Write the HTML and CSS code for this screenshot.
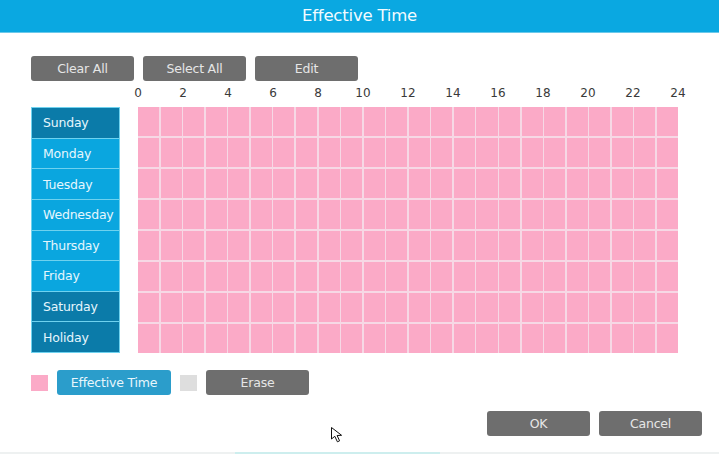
FILE: index.html
```html
<!DOCTYPE html>
<html>
<head>
<meta charset="utf-8">
<link rel="stylesheet" href="styles.css">
</head>
<body>
<div class="dialog">
  <header class="title-bar">Effective Time</header>
  <main class="content">
    <div class="toolbar">
      <button class="btn">Clear All</button>
      <button class="btn">Select All</button>
      <button class="btn">Edit</button>
    </div>
    <div class="hours">
      <span>0</span><span>2</span><span>4</span><span>6</span><span>8</span><span>10</span><span>12</span><span>14</span><span>16</span><span>18</span><span>20</span><span>22</span><span>24</span>
    </div>
    <div class="schedule">
      <ul class="days">
        <li class="day dark">Sunday</li>
        <li class="day">Monday</li>
        <li class="day">Tuesday</li>
        <li class="day">Wednesday</li>
        <li class="day">Thursday</li>
        <li class="day">Friday</li>
        <li class="day dark">Saturday</li>
        <li class="day dark">Holiday</li>
      </ul>
      <div class="grid" id="grid"></div>
    </div>
    <div class="legend">
      <span class="swatch pink"></span>
      <button class="btn btn-blue">Effective Time</button>
      <span class="swatch gray"></span>
      <button class="btn">Erase</button>
    </div>
    <div class="actions">
      <button class="btn">OK</button>
      <button class="btn">Cancel</button>
    </div>
  </main>
  <div class="bottom-strip"><span class="strip-accent"></span></div>
  <svg class="cursor" width="16" height="18" viewBox="0 0 16 18">
    <path d="M1.5 1.5 L1.5 13 L4.8 10.3 L7.4 15.8 L9.6 14.8 L7.1 9.5 L11.6 9.3 Z" fill="#fff" stroke="#111" stroke-width="1" stroke-linejoin="round"/>
  </svg>
</div>
<script>
  var g = document.getElementById('grid');
  for (var i = 0; i < 192; i++) {
    var c = document.createElement('div');
    c.className = 'cell';
    g.appendChild(c);
  }
</script>
</body>
</html>
```

FILE: styles.css
```css
* { box-sizing: border-box; }
html, body { margin: 0; padding: 0; background: #fff; }
body {
  width: 719px;
  height: 454px;
  overflow: hidden;
  font-family: "DejaVu Sans", "Noto Sans", sans-serif;
}
.dialog {
  position: relative;
  width: 719px;
  height: 454px;
}
.title-bar {
  height: 33px;
  background: #0aa8e1;
  border-bottom: 1px solid #6cc9ea;
  color: #f2fbff;
  font-size: 16.5px;
  line-height: 32px;
  text-align: center;
  letter-spacing: -0.2px;
}
.content {
  padding: 23px 17px 0 31px;
}
.toolbar {
  display: flex;
  gap: 9px;
}
.btn {
  width: 103px;
  height: 25px;
  border: none;
  border-radius: 3px;
  background: #6e6e6e;
  color: #e6e6e6;
  font-family: "DejaVu Sans", "Noto Sans", sans-serif;
  font-size: 12.5px;
  padding: 0;
  letter-spacing: -0.2px;
}
.btn-blue {
  width: 114px;
  background: #2b9dcb;
  color: #e8f6fc;
}
.hours {
  display: grid;
  grid-template-columns: repeat(13, 45px);
  margin-left: 84.5px;
  height: 26px;
  align-items: start;
}
.hours span {
  text-align: center;
  font-size: 12px;
  color: #3a3a3a;
  line-height: 24px;
}
.schedule {
  display: flex;
  gap: 18px;
}
.days {
  list-style: none;
  margin: 0;
  padding: 0;
  width: 89px;
  height: 246px;
  border: 1px solid #6fd2ef;
  display: flex;
  flex-direction: column;
  gap: 1px;
  background: #6fd2ef;
}
.day {
  flex: 1;
  background: #0aa6df;
  color: #e6f6fd;
  font-size: 12.5px;
  padding-left: 11px;
  display: flex;
  align-items: center;
  letter-spacing: -0.2px;
}
.day.dark { background: #0b7ba9; }
.grid {
  width: 540px;
  height: 246px;
  display: grid;
  grid-template-columns: repeat(24, 1fr);
  grid-template-rows: repeat(8, 1fr);
  gap: 1.5px;
  background: #f6d8e5;
}
.cell { background: #fbaac7; }
.legend {
  display: flex;
  align-items: center;
  gap: 9px;
  margin-top: 17px;
}
.swatch {
  width: 17px;
  height: 16px;
  display: block;
}
.swatch.pink { background: #fbaac7; }
.swatch.gray { background: #dedede; }
.actions {
  display: flex;
  justify-content: flex-end;
  gap: 9px;
  margin-top: 16px;
}
.bottom-strip {
  position: absolute;
  left: 0;
  right: 0;
  bottom: 0;
  height: 2px;
  background: #eef1f1;
}
.strip-accent {
  display: block;
  margin-left: 235px;
  width: 205px;
  height: 2px;
  background: #cdeeee;
}
.cursor {
  position: absolute;
  left: 330px;
  top: 426px;
}
```
